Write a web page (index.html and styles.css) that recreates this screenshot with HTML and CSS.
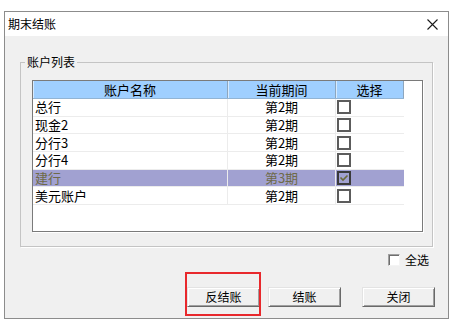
FILE: index.html
```html
<!DOCTYPE html>
<html>
<head>
<meta charset="utf-8">
<link rel="stylesheet" href="styles.css">
</head>
<body>
<div class="window">
  <div class="titlebar">
    <span class="title">期末结账</span>
    <svg class="close" viewBox="0 0 11 11"><path d="M0.5 0.5L10.5 10.5M10.5 0.5L0.5 10.5" stroke="#1a1a1a" stroke-width="1.1" fill="none"/></svg>
  </div>
  <fieldset class="group">
    <legend>账户列表</legend>
    <div class="table">
      <div class="grid">
        <div class="row head"><div class="c1">账户名称</div><div class="c2">当前期间</div><div class="c3">选择</div></div>
        <div class="row"><div class="c1">总行</div><div class="c2">第2期</div><div class="c3"><span class="chk"></span></div></div>
        <div class="row"><div class="c1">现金2</div><div class="c2">第2期</div><div class="c3"><span class="chk"></span></div></div>
        <div class="row"><div class="c1">分行3</div><div class="c2">第2期</div><div class="c3"><span class="chk"></span></div></div>
        <div class="row"><div class="c1">分行4</div><div class="c2">第2期</div><div class="c3"><span class="chk"></span></div></div>
        <div class="row sel"><div class="c1">建行</div><div class="c2">第3期</div><div class="c3"><span class="chk on"><svg viewBox="0 0 10 10"><path d="M1.5 4.5L4 7L8.5 2.5" stroke="#6b6a38" stroke-width="1.6" fill="none"/></svg></span></div></div>
        <div class="row"><div class="c1">美元账户</div><div class="c2">第2期</div><div class="c3"><span class="chk"></span></div></div>
      </div>
    </div>
  </fieldset>
  <div class="options"><span class="cb"></span><span class="cb-label">全选</span></div>
  <div class="buttons">
    <button class="btn">反结账</button>
    <button class="btn b2">结账</button>
    <button class="btn b3">关闭</button>
  </div>
  <div class="highlight"></div>
</div>
</body>
</html>
```
FILE: styles.css
```css
* { box-sizing: border-box; }
body {
  margin: 0;
  background: #fff;
  font-family: "Noto Sans CJK SC", "Noto Sans", sans-serif;
  font-size: 12px;
  color: #000;
}
.window {
  position: relative;
  margin: 11px 0 0 4px;
  width: 445px;
  height: 308px;
  border: 1px solid #8c8c8c;
  background: #f0f0f0;
}
.titlebar {
  height: 24px;
  background: #fff;
  display: flex;
  align-items: center;
  justify-content: space-between;
  padding: 0 10px 0 3px;
}
.title { font-size: 12px; line-height: 12px; }
.close { width: 11px; height: 11px; display: block; }
.group {
  margin: 20px 0 0 15px;
  width: 413px;
  min-width: 0;
  padding: 12px 9px 14px 11px;
  border: 1px solid #c4c4c4;
  box-shadow: 1px 1px 0 #fff;
}
.group legend {
  font-size: 12px;
  line-height: 12px;
  padding: 0 2px;
  margin-left: -7px;
}
.table {
  height: 152px;
  border: 1px solid #7a7a7a;
  background: #fff;
  box-shadow: 1px 1px 0 #fff;
}
.grid { width: 371px; }
.row {
  display: grid;
  grid-template-columns: 195px 108px 68px;
  height: 17.67px;
  border-bottom: 1px solid #ececec;
  font-size: 13px;
  line-height: 16px;
}
.row > div {
  display: flex;
  align-items: center;
}
.row .c1 { padding-left: 2px; border-right: 1px solid #ececec; }
.row .c2 { justify-content: center; border-right: 1px solid #ececec; }
.row.head {
  height: 18px;
  background: #9fcfff;
  border-bottom: 1px solid #92b4d4;
}
.row.head > div {
  justify-content: center;
  padding-left: 0;
  border-right: 1px solid #8ea6bd;
  box-shadow: inset 1px 0 0 #d6ebff;
}
.row.sel { background: #a1a1d1; color: #6e6a48; }
.chk {
  display: block;
  width: 14px;
  height: 14px;
  margin-left: 1px;
  border: 2px solid #5c5c5c;
  background: #fff;
}
.chk.on { background: transparent; border-color: #3a3a3a; }
.chk svg { display: block; width: 10px; height: 10px; }
.options {
  display: flex;
  justify-content: flex-end;
  align-items: center;
  gap: 5px;
  margin-top: 6px;
  height: 14px;
  padding-right: 19px;
}
.cb {
  width: 12px;
  height: 12px;
  background: #fff;
  border: 1px solid;
  border-color: #a0a0a0 #f4f4f4 #f4f4f4 #a0a0a0;
  box-shadow: inset 1px 1px 0 #6e6e6e;
}
.cb-label { font-size: 12px; line-height: 14px; }
.buttons {
  display: flex;
  margin-top: 20px;
  padding-left: 182px;
}
.btn {
  width: 73px;
  height: 20px;
  padding: 0;
  font-family: "Noto Sans CJK SC", sans-serif;
  font-size: 12px;
  line-height: 16px;
  color: #000;
  background: #f0f0f0;
  border: 1px solid;
  border-color: #e3e3e3 #696969 #696969 #e3e3e3;
  box-shadow: inset 1px 1px 0 #fff, inset -1px -1px 0 #a0a0a0;
}
.b2 { margin-left: 8px; }
.b3 { margin-left: 21px; }
.highlight {
  position: absolute;
  left: 180px;
  top: 260px;
  width: 76px;
  height: 44px;
  border: 2px solid #e8282c;
}
```
